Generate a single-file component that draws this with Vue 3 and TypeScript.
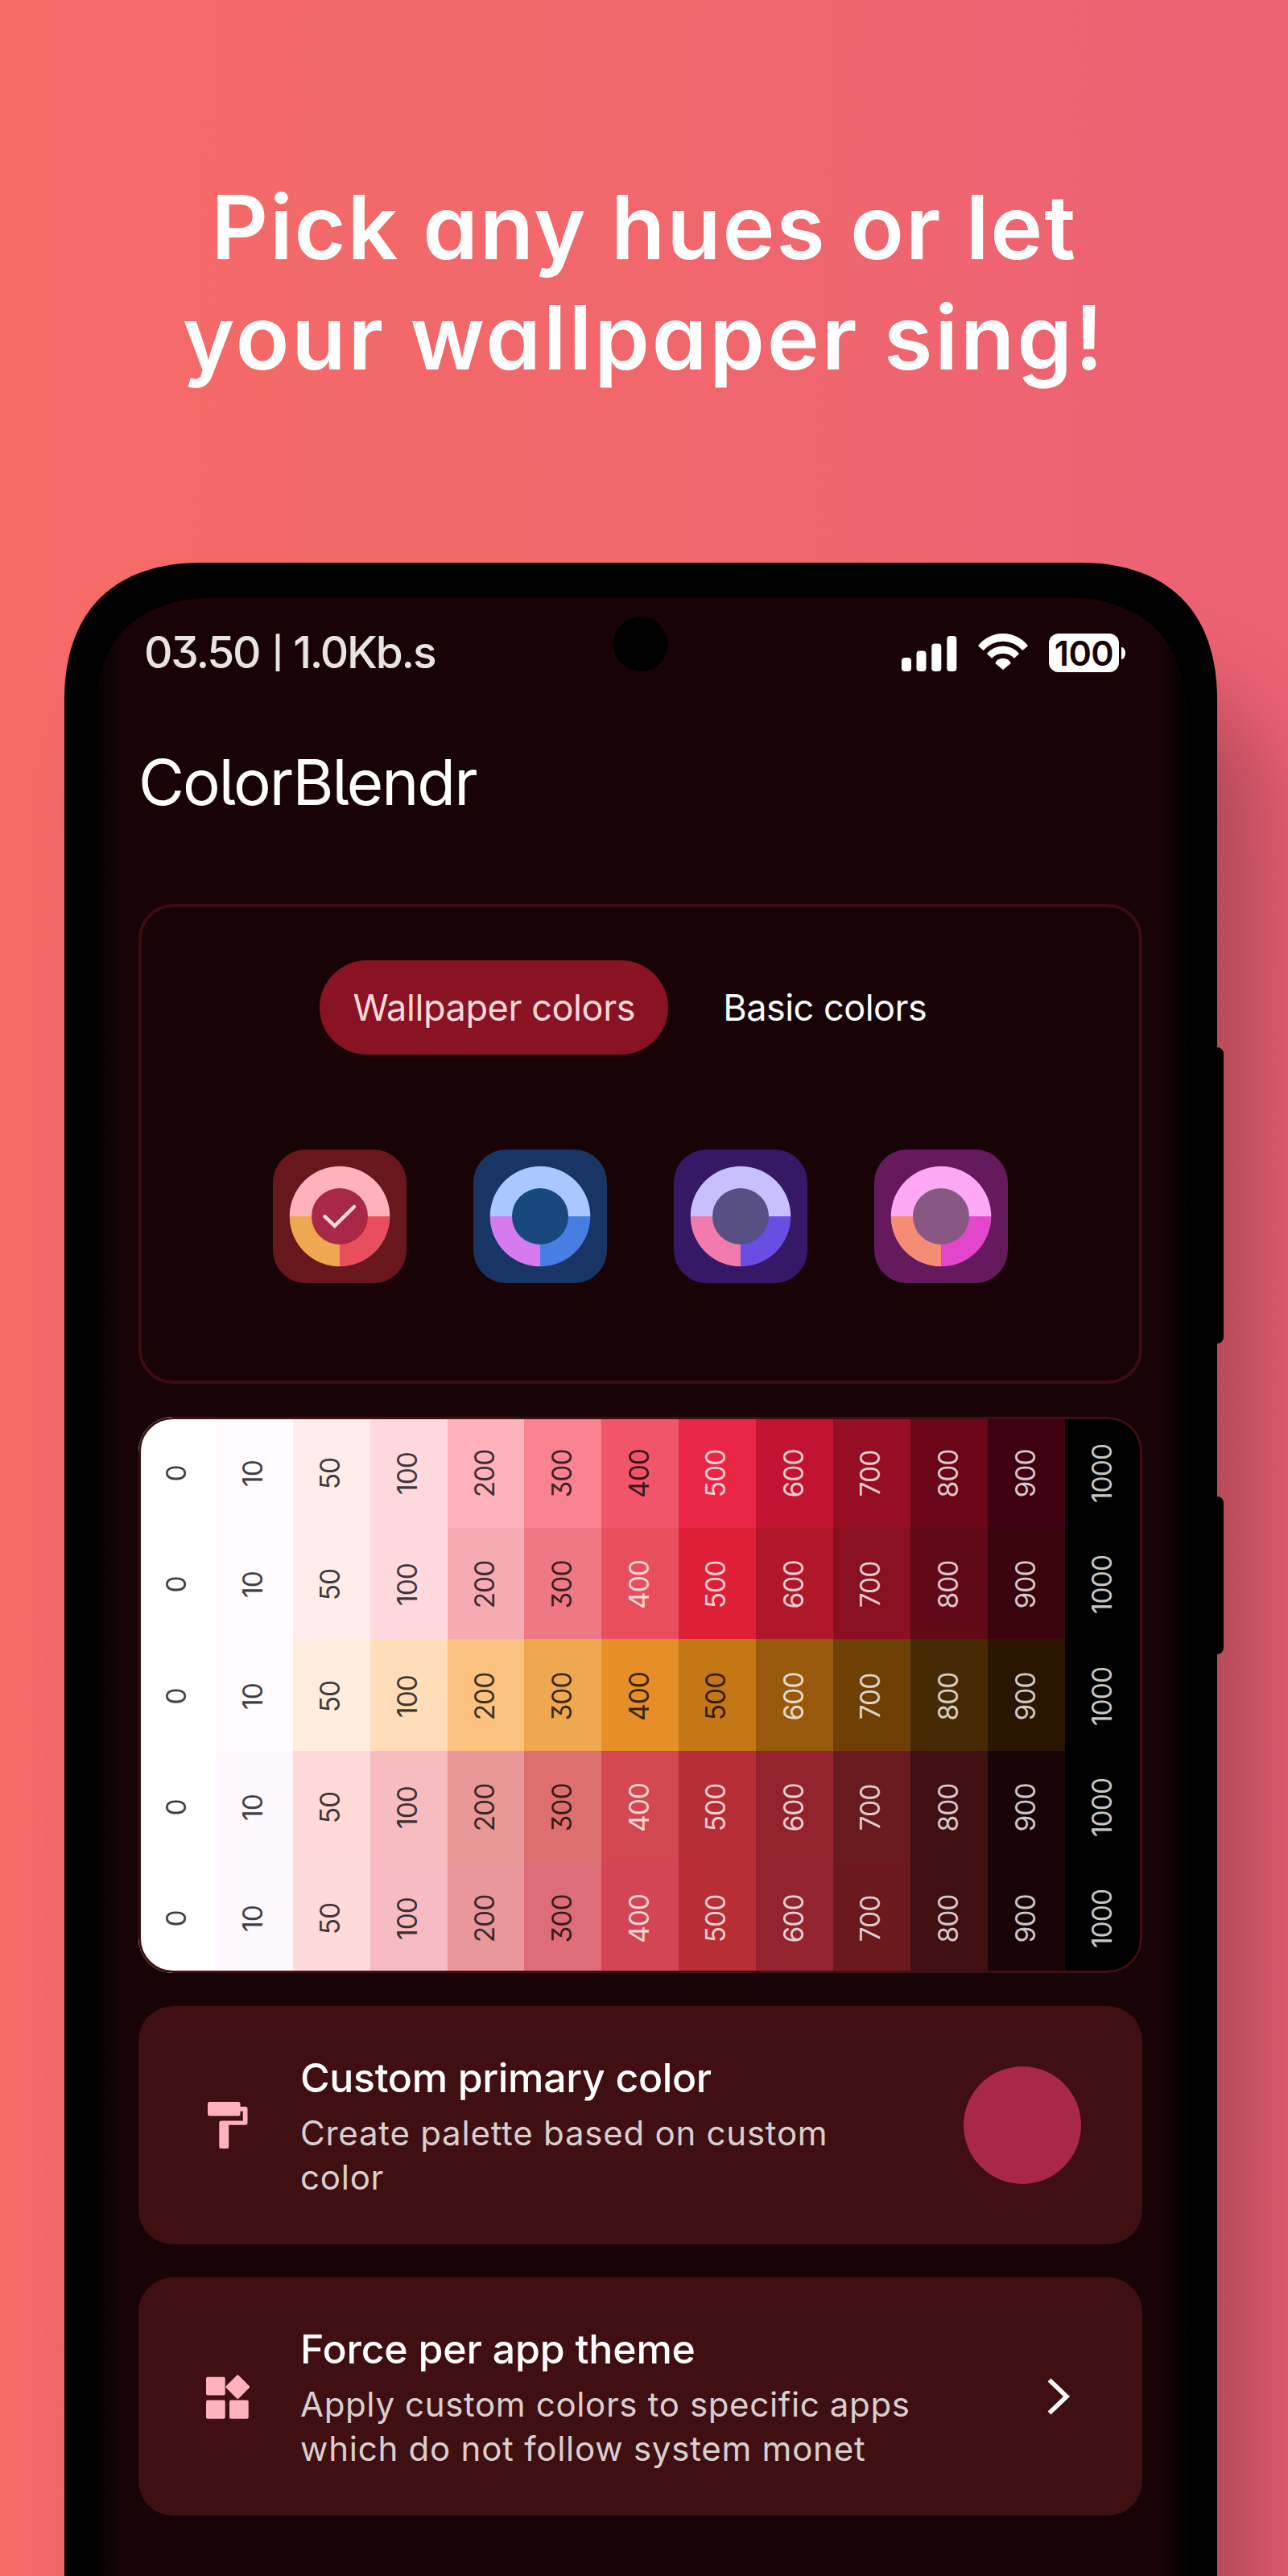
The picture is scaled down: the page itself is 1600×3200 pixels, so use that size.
<script setup lang="ts">
interface Tile {
  bg: string
  top: string
  left: string
  right: string
  core: string
  checked: boolean
}
interface Row {
  colors: string[]
  darkUntil: number
}

const headline: { text: string; cls: string }[] = [
  { text: 'Pick any hues or let', cls: 'first' },
  { text: 'your wallpaper sing!', cls: 'second' },
]

const tiles: Tile[] = [
  { bg: '#68181c', top: '#ffb2bb', left: '#efa850', right: '#e94e5c', core: '#a82845', checked: true },
  { bg: '#193566', top: '#a8c8ff', left: '#d67aef', right: '#487de4', core: '#18487d', checked: false },
  { bg: '#351966', top: '#c8bfff', left: '#f27aac', right: '#694ee4', core: '#585085', checked: false },
  { bg: '#661a5e', top: '#fca8f5', left: '#f58d76', right: '#e446cb', core: '#885884', checked: false },
]

const shades: number[] = [0, 10, 50, 100, 200, 300, 400, 500, 600, 700, 800, 900, 1000]

const rows: Row[] = [
  { darkUntil: 400, colors: ['#ffffff', '#fffbff', '#ffedec', '#ffd9de', '#ffb2bb', '#f98391', '#f2546a', '#e92645', '#c21332', '#950e23', '#690719', '#3f0011', '#000000'] },
  { darkUntil: 300, colors: ['#ffffff', '#fffbff', '#ffedec', '#ffd9de', '#f6aab2', '#ee7984', '#e94e5c', '#dd2035', '#b01729', '#891020', '#5f0a16', '#3a040d', '#000000'] },
  { darkUntil: 500, colors: ['#ffffff', '#fffbff', '#ffeedf', '#ffddb8', '#fac17f', '#efa850', '#e68e27', '#c57614', '#98590d', '#6f4006', '#462a03', '#291500', '#000000'] },
  { darkUntil: 300, colors: ['#ffffff', '#fef8ff', '#ffdad9', '#f6bcc0', '#e89897', '#dd706e', '#d24750', '#b72d36', '#92232d', '#681a1f', '#3f0f12', '#180406', '#000000'] },
  { darkUntil: 300, colors: ['#ffffff', '#fef8ff', '#ffdada', '#f6bcc1', '#e9979b', '#df6d79', '#d34455', '#b92d34', '#92232f', '#6a181c', '#3f0f12', '#180406', '#000000'] },
]
</script>

<template>
  <main class="poster">
    <h1 class="headline">
      <span v-for="line in headline" :key="line.cls" :class="line.cls">{{ line.text }}</span>
    </h1>

    <section class="phone">
      <div class="shadow"></div>
      <i class="key volume"></i>
      <i class="key power"></i>
      <svg class="body" viewBox="0 0 1432 2501" aria-hidden="true">
        <defs>
          <linearGradient id="edge" x1="37" x2="1394.5" y1="0" y2="0" gradientUnits="userSpaceOnUse">
            <stop offset="0" stop-color="#030001" />
            <stop offset="0.011" stop-color="#0e0203" />
            <stop offset="0.027" stop-color="#180406" />
            <stop offset="0.973" stop-color="#180406" />
            <stop offset="0.989" stop-color="#0e0203" />
            <stop offset="1" stop-color="#030001" />
          </linearGradient>
        </defs>
        <path d="M0 2501V170C0 61 61 0 170 0H1262C1371 0 1432 61 1432 170V2501Z" fill="#000" />
        <path d="M37 2501V197C37 97 87 43.500 190 43.500H1242C1344 43.500 1394.500 97 1394.500 197V2501Z" fill="url(#edge)" />
        <circle cx="716" cy="101" r="34" fill="#000" />
      </svg>

      <div class="screen">
        <header class="status">
          <span class="clock">03.50 <span class="bar">|</span> 1.0Kb.s</span>
          <span class="indicators">
            <svg class="signal" width="69" height="44" viewBox="0 0 69 44">
              <rect x="0" y="27" width="12" height="17" rx="4" />
              <rect x="18.500" y="18.500" width="12" height="25.500" rx="4" />
              <rect x="37.300" y="9.500" width="12" height="34.500" rx="4" />
              <rect x="56.300" y="0" width="12" height="44" rx="4" />
            </svg>
            <svg class="wifi" width="62" height="45" viewBox="0 0 62 45">
              <path d="M0 15.300A39 39 0 0 1 62 15.300L55.400 21A32 32 0 0 0 6.600 21Z" />
              <path d="M10.900 25A26 26 0 0 1 51.100 25L45 30.700A19.300 19.300 0 0 0 17 30.700Z" />
              <path d="M21.300 37A10.600 10.600 0 0 1 40.700 37L31 45Z" />
            </svg>
            <span class="battery"><b>100</b><i></i></span>
          </span>
        </header>

        <h2 class="app-name">ColorBlendr</h2>

        <section class="picker">
          <nav class="tabs">
            <button class="tab active">Wallpaper colors</button>
            <button class="tab basic">Basic colors</button>
          </nav>
          <div class="tiles">
            <svg v-for="tile in tiles" :key="tile.bg" width="166" height="166" viewBox="0 0 166 166">
              <rect width="166" height="166" rx="41" :fill="tile.bg" />
              <path d="M20.700 83A62.300 62.300 0 0 1 145.300 83Z" :fill="tile.top" />
              <path d="M20.700 83A62.300 62.300 0 0 0 83 145.300V83Z" :fill="tile.left" />
              <path d="M145.300 83A62.300 62.300 0 0 1 83 145.300V83Z" :fill="tile.right" />
              <circle cx="83" cy="83" r="35" :fill="tile.core" />
              <path v-if="tile.checked" d="M64.500 83.200L76.700 94.800L101 71" fill="none" stroke="#ffd9de" stroke-width="4.500" stroke-linecap="round" />
            </svg>
          </div>
        </section>

        <section class="palette">
          <div v-for="(row, r) in rows" :key="r" class="row">
            <div
              v-for="(color, c) in row.colors"
              :key="c"
              class="cell"
              :class="{ dark: shades[c] <= row.darkUntil }"
              :style="{ background: color }"
            >
              <span>{{ shades[c] }}</span>
            </div>
          </div>
        </section>

        <article class="option">
          <span class="icon">
            <svg width="50" height="58" viewBox="0 0 50 58" fill="#ffb2bb">
              <path d="M2.500 0H38a2.500 2.500 0 0 1 2.500 2.500V6H47a2.500 2.500 0 0 1 2.500 2.500V26.300a2.500 2.500 0 0 1-2.500 2.500H26.200V55.500a2.500 2.500 0 0 1-2.500 2.500H16.800a2.500 2.500 0 0 1-2.500-2.500V26.100a2.500 2.500 0 0 1 2.500-2.500H43.800V11.800H40.500V15a2.500 2.500 0 0 1-2.500 2.500H2.500A2.500 2.500 0 0 1 0 15V2.500A2.500 2.500 0 0 1 2.500 0Z" />
            </svg>
          </span>
          <div class="copy">
            <h3 class="t1">Custom primary color</h3>
            <p><span class="d1">Create palette based on custom</span><span class="d2">color</span></p>
          </div>
          <i class="swatch"></i>
        </article>

        <article class="option">
          <span class="icon">
            <svg width="55" height="55" viewBox="0 0 55 55" fill="#ffb2bb">
              <rect x="0" y="2.800" width="23.700" height="22.700" rx="2" />
              <rect x="0" y="31.600" width="23.700" height="23.100" rx="2" />
              <rect x="29" y="31.600" width="23.700" height="23.100" rx="2" />
              <rect x="28.300" y="4.200" width="22" height="22" rx="2" transform="rotate(45 39.300 15.200)" />
            </svg>
          </span>
          <div class="copy">
            <h3 class="t2">Force per app theme</h3>
            <p><span class="d3">Apply custom colors to specific apps</span><span class="d4">which do not follow system monet</span></p>
          </div>
          <svg class="chevron" width="30" height="46" viewBox="0 0 30 46">
            <path d="M2.500 2.500L24 23L2.500 43.500" fill="none" stroke="#fff" stroke-width="5.600" />
          </svg>
        </article>
      </div>
    </section>
  </main>
</template>

<style>
html,
body {
  margin: 0;
}
</style>

<style scoped>
.poster {
  width: 1600px;
  height: 3200px;
  overflow: hidden;
  box-sizing: border-box;
  padding: 214px 0 0;
  background: linear-gradient(91deg, #f66b66 0%, #f1676c 50%, #ec6175 100%);
  font-family: Inter, 'Liberation Sans', sans-serif;
  color: #fff;
}
.headline {
  margin: 0;
  height: 485px;
  display: flex;
  flex-direction: column;
  align-items: center;
  font-size: 110px;
  font-weight: 600;
  line-height: 137px;
  white-space: nowrap;
  font-feature-settings: 'cv11';
}
.first {
  letter-spacing: 1.800px;
}
.second {
  letter-spacing: 2.900px;
}
.phone {
  position: relative;
  width: 1432px;
  height: 2501px;
  margin-left: 80px;
}
.shadow {
  position: absolute;
  inset: 0 0 -400px;
  border-radius: 150px;
  box-shadow: 63px 150px 106px rgba(0, 0, 0, 0.25);
}
.key {
  position: absolute;
  left: 1424px;
  width: 16px;
  border-radius: 8px;
  background: #000;
}
.volume {
  top: 602px;
  height: 368px;
}
.power {
  top: 1160px;
  height: 196px;
}
.body {
  position: absolute;
  inset: 0;
  width: 1432px;
  height: 2501px;
}
.screen {
  position: relative;
  padding: 78px 93.500px 0 92px;
}
.status {
  display: flex;
  justify-content: space-between;
  height: 66px;
  padding: 0 20.500px 0 7px;
}
.clock {
  font-size: 55px;
  line-height: 66px;
  font-weight: 500;
  color: #e8e4e5;
  white-space: pre;
  letter-spacing: -2.200px;
  font-feature-settings: 'cv09';
}
.bar {
  padding: 0 2px 0 3px;
  font-size: 39px;
  font-weight: 600;
  line-height: 1;
  vertical-align: 5px;
}
.indicators {
  display: flex;
  align-items: flex-start;
  padding-top: 10px;
}
.indicators svg {
  fill: #fff;
}
.signal {
  margin: 3px 26px 0 0;
}
.wifi {
  margin-right: 26px;
}
.battery {
  display: flex;
  align-items: center;
}
.battery b {
  width: 87px;
  height: 48px;
  border-radius: 12px;
  background: #fff;
  color: #180406;
  text-align: center;
  font-size: 43px;
  font-weight: 600;
  line-height: 48px;
  letter-spacing: -0.500px;
}
.battery i {
  width: 5px;
  height: 15px;
  margin-left: 3px;
  border-radius: 0 5px 5px 0 / 0 8px 8px 0;
  background: #fff;
}
.app-name {
  margin: 81px 0 103px;
  font-size: 78px;
  line-height: 96px;
  font-weight: 400;
  letter-spacing: -2px;
  font-feature-settings: 'cv05';
}
.picker {
  box-sizing: border-box;
  height: 596px;
  border: 4px solid #3b0e11;
  border-radius: 43px;
  padding-top: 66px;
}
.tabs {
  display: flex;
  justify-content: center;
  gap: 26px;
}
.tab {
  height: 117px;
  width: 337px;
  padding: 0;
  border: 0;
  border-radius: 59px;
  background: none;
  color: #fff;
  font: 400 45px/117px Inter, 'Liberation Sans', sans-serif;
  letter-spacing: -0.500px;
  white-space: nowrap;
}
.tab.active {
  width: 433px;
  background: #891223;
  color: #ffd9de;
  letter-spacing: -0.400px;
}
.tiles {
  display: flex;
  justify-content: center;
  gap: 83px;
  margin-top: 118px;
}
.palette {
  position: relative;
  margin-top: 41px;
  height: 691px;
  border-radius: 43px;
  overflow: hidden;
  display: flex;
  flex-direction: column;
}
.palette::after {
  content: '';
  position: absolute;
  inset: 0;
  border: 3.500px solid #3f0f12;
  border-radius: 43px;
}
.row {
  flex: 1;
  display: flex;
}
.cell {
  flex: 1;
  display: flex;
  align-items: center;
  justify-content: center;
  color: rgba(255, 255, 255, 0.78);
  font-size: 33.500px;
  letter-spacing: -1px;
  font-feature-settings: 'cv09';
}
.cell.dark {
  color: rgba(0, 0, 0, 0.76);
}
.cell span {
  transform: rotate(-90deg) translate(-1.500px, -1.500px);
}
.option {
  box-sizing: border-box;
  display: flex;
  height: 296px;
  margin-top: 41px;
  border-radius: 43px;
  background: #3f0f12;
  align-items: center;
}
.icon {
  width: 201px;
  display: flex;
  justify-content: flex-start;
  padding-left: 84px;
  box-sizing: border-box;
}
.icon svg[width='50'] {
  margin-left: 2px;
}
.copy {
  flex: 1;
  height: 178px;
}
.copy h3 {
  margin: 0 0 11px;
  font-size: 50px;
  line-height: 60px;
  font-weight: 500;
  letter-spacing: -0.350px;
  white-space: nowrap;
}
.copy .t2 {
  letter-spacing: -0.200px;
}
.copy p {
  margin: 0;
  font-size: 42px;
  line-height: 55px;
  color: #d9cfd0;
  white-space: nowrap;
  font-weight: 400;
  letter-spacing: 0.760px;
}
.copy p span {
  display: block;
}
.copy .d3 {
  letter-spacing: 0.650px;
}
.swatch {
  width: 146px;
  height: 146px;
  margin-right: 76px;
  border-radius: 50%;
  background: #a82845;
}
.chevron {
  margin-right: 88px;
}
</style>
